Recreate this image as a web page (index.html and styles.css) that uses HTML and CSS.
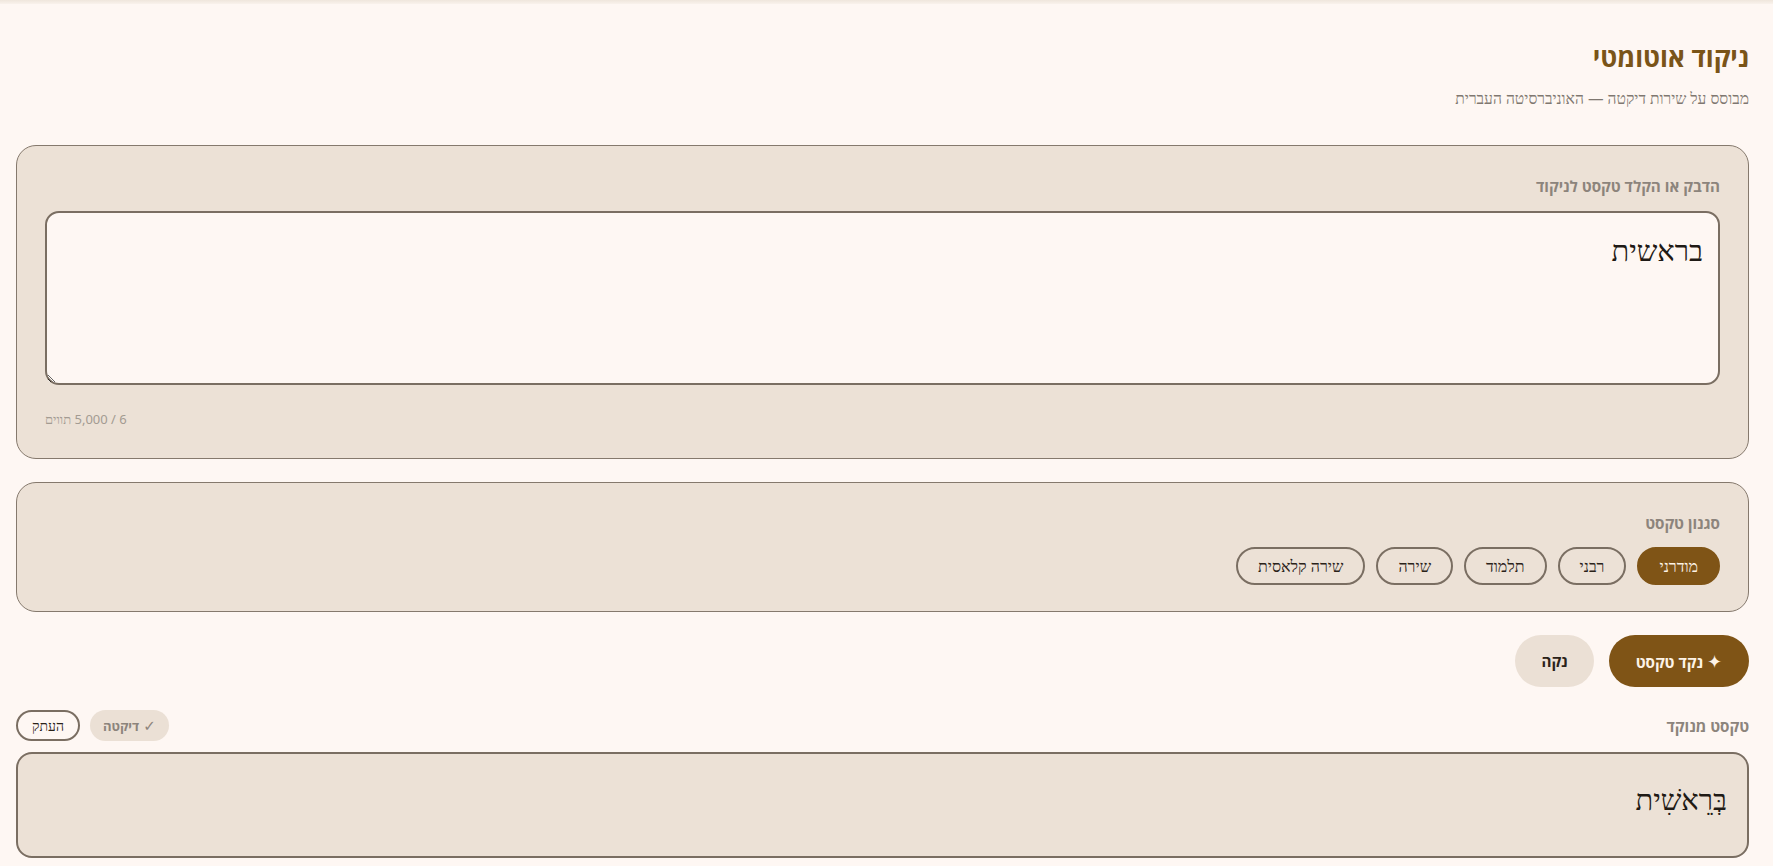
FILE: index.html
```html
<!DOCTYPE html>
<html lang="he" dir="rtl">
<head>
<meta charset="utf-8">
<title>ניקוד אוטומטי</title>
<link rel="stylesheet" href="styles.css">
</head>
<body>
<div class="topbar"></div>
<main class="page">
  <header class="header">
    <h1 class="title">ניקוד אוטומטי</h1>
    <p class="subtitle">מבוסס על שירות דיקטה — האוניברסיטה העברית</p>
  </header>

  <section class="card card-input">
    <label class="label" for="src">הדבק או הקלד טקסט לניקוד</label>
    <textarea id="src" class="textarea">בראשית</textarea>
    <div class="counter">6 / 5,000 תווים</div>
  </section>

  <section class="card card-style">
    <div class="label">סגנון טקסט</div>
    <div class="chips">
      <button class="chip chip-active">מודרני</button>
      <button class="chip">רבני</button>
      <button class="chip">תלמוד</button>
      <button class="chip">שירה</button>
      <button class="chip">שירה קלאסית</button>
    </div>
  </section>

  <div class="actions">
    <button class="btn btn-primary"><span class="spark">✦</span> נקד טקסט</button>
    <button class="btn btn-secondary">נקה</button>
  </div>

  <div class="out-head">
    <div class="out-label">טקסט מנוקד</div>
    <div class="out-tools">
      <span class="badge"><span class="check">✓</span> דיקטה</span>
      <button class="copy">העתק</button>
    </div>
  </div>

  <div class="output">בְּרֵאשִׁית</div>
</main>
</body>
</html>
```

FILE: styles.css
```css
* { box-sizing: border-box; }

html, body {
  margin: 0;
  padding: 0;
  background: #fef7f3;
}

body {
  font-family: "Noto Sans", serif;
  color: #2a2219;
}

button, textarea {
  font-family: "Noto Sans", serif;
}

.topbar {
  height: 4px;
  background: linear-gradient(#efe6dc, #f9f2ec);
}

.page {
  padding: 33px 24px 0 16px;
}

.header {
  margin-bottom: 37px;
}

.title {
  margin: 0;
  font-family: "Open Sans", serif;
  font-size: 26px;
  line-height: 40px;
  font-weight: bold;
  color: #7a5418;
}

.subtitle {
  margin: 11px 0 0;
  font-size: 15.6px;
  line-height: 20px;
  color: #7f7770;
}

.card {
  background: #ece1d6;
  border: 1px solid #85796d;
  border-radius: 20px;
  padding: 30px 28px 30px;
}

.card-style {
  margin-top: 23px;
  padding-bottom: 26px;
}

.label {
  display: block;
  font-family: "Open Sans", serif;
  font-size: 15.2px;
  line-height: 20px;
  font-weight: bold;
  color: #8c847c;
  margin-bottom: 15px;
}

.card-style .label {
  margin-bottom: 14px;
}

.textarea {
  display: block;
  width: 100%;
  height: 174px;
  resize: vertical;
  background: #fef7f3;
  border: 2px solid #7a6e62;
  border-radius: 14px;
  padding: 18px 15px;
  font-size: 29px;
  line-height: 38px;
  color: #1f1a15;
  outline: none;
}

.counter {
  margin-top: 25px;
  font-size: 13px;
  line-height: 18px;
  color: #a39b92;
  text-align: left;
}

.chips {
  display: flex;
  gap: 11px;
}

.chip {
  height: 38px;
  padding: 0 20px;
  border: 2px solid #7a6e62;
  border-radius: 19px;
  background: transparent;
  font-size: 16px;
  color: #2a2219;
}

.chip-active {
  background: #7f5416;
  border-color: #7f5416;
  color: #fdf3e6;
}

.actions {
  display: flex;
  gap: 15px;
  margin-top: 23px;
}

.btn {
  height: 52px;
  border: none;
  border-radius: 26px;
  font-family: "Open Sans", serif;
  font-weight: bold;
  font-size: 15.2px;
}

.btn-primary {
  background: #7f5416;
  color: #fdf3e6;
  padding: 0 27px;
}

.spark {
  font-family: "DejaVu Sans", sans-serif;
  font-size: 18px;
}

.btn-secondary {
  background: #ebe0d5;
  color: #2a2219;
  padding: 0 26px;
}

.out-head {
  display: flex;
  justify-content: space-between;
  align-items: center;
  margin-top: 23px;
  height: 31px;
}

.out-label {
  font-family: "Open Sans", serif;
  font-size: 15.2px;
  font-weight: bold;
  color: #8c847c;
}

.out-tools {
  display: flex;
  align-items: center;
  gap: 10px;
}

.badge {
  display: inline-flex;
  align-items: center;
  gap: 4px;
  height: 31px;
  padding: 0 13px;
  background: #ebe0d5;
  border-radius: 16px;
  font-family: "Open Sans", serif;
  font-weight: bold;
  font-size: 13px;
  color: #8c847c;
}

.check {
  font-family: "DejaVu Sans", sans-serif;
  font-weight: normal;
  font-size: 15px;
}

.copy {
  height: 31px;
  padding: 0 14px;
  border: 2px solid #7a6e62;
  border-radius: 16px;
  background: transparent;
  font-size: 14px;
  color: #2a2219;
}

.output {
  margin-top: 11px;
  background: #ece1d6;
  border: 2px solid #7a6e62;
  border-radius: 16px;
  padding: 25px 20px;
  height: 106px;
  font-size: 29px;
  line-height: 40px;
  color: #1f1a15;
}
```
